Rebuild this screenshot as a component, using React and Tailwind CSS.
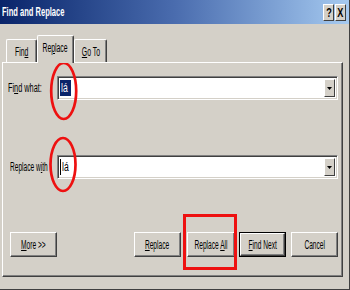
import React from "react";

const F = { fontFamily: '"Liberation Sans", Arial, sans-serif' };

function S({ children, k = "scale-x-[0.55]", o = "origin-left" }) {
  return <span className={`inline-block whitespace-nowrap ${k} ${o}`}>{children}</span>;
}

function Btn({ children, w = "w-[47px]", def = false, cls = "" }) {
  const inner = (
    <div className="h-full w-full bg-[#d4d0c8] border-t border-l border-t-white border-l-white border-r border-b border-r-[#404040] border-b-[#404040] shadow-[inset_-1px_-1px_0_#808080] flex items-center justify-center text-[12px] text-black">
      <S o="origin-center">{children}</S>
    </div>
  );
  return (
    <div className={`${w} h-[25px] ${def ? "border border-black" : ""} ${cls}`}>{inner}</div>
  );
}

function Combo({ children }) {
  return (
    <div className="w-[281px] h-[24px] border-t border-l border-t-[#808080] border-l-[#808080] border-b border-r border-b-white border-r-white shadow-[inset_1px_1px_0_#404040,inset_-1px_-1px_0_#d4d0c8] bg-white flex items-center pl-[2px] pr-[2px] py-[2px]">
      <div className="flex-1 flex items-center h-full text-[12px]">{children}</div>
      <div className="w-[11px] h-full bg-[#d4d0c8] border-t border-l border-t-white border-l-white border-r border-b border-r-[#404040] border-b-[#404040] flex items-center justify-center">
        <svg width="5" height="3" viewBox="0 0 5 3"><path d="M0 0H5L2.5 3Z" fill="#000" /></svg>
      </div>
    </div>
  );
}

function Tab({ children, active, w }) {
  return (
    <div
      className={`${w} ${active ? "h-[28px] -mb-px z-10 bg-[#d4d0c8]" : "h-[23px]"} border-t border-l border-r border-t-white border-l-white border-r-[#404040] shadow-[inset_-1px_0_0_#808080] rounded-t-[2px] flex items-center justify-center text-[12px] text-black ${active ? "pb-[3px]" : "pt-[1px]"}`}
    >
      <S k="scale-x-[0.57]" o="origin-center">{children}</S>
    </div>
  );
}

export default function App() {
  return (
    <div className="relative w-[350px] h-[290px] bg-[#d4d0c8] overflow-hidden border-r border-b border-r-[#404040] border-b-[#404040]" style={F}>
      <div className="flex flex-col">
        {/* title bar */}
        <div className="h-[24px] bg-gradient-to-r from-[#0a246a] via-[#4a6cae] to-[#a6caf0] flex items-center pl-[2px] pr-[3px]">
          <span className="inline-block whitespace-nowrap scale-x-[0.58] origin-left text-white font-bold text-[13px]">Find and Replace</span>
          <div className="ml-auto flex gap-[1px] items-center">
            <div className="w-[11px] h-[17px] bg-[#d4d0c8] border-t border-l border-t-white border-l-white border-r border-b border-r-[#404040] border-b-[#404040] flex items-center justify-center text-[13px] font-bold leading-none text-black">
              <S k="scale-x-[0.7]" o="origin-center">?</S>
            </div>
            <div className="w-[11px] h-[17px] bg-[#d4d0c8] border-t border-l border-t-white border-l-white border-r border-b border-r-[#404040] border-b-[#404040] flex items-center justify-center text-[13px] font-bold leading-none text-black">
              <S k="scale-x-[0.7]" o="origin-center">X</S>
            </div>
          </div>
        </div>

        {/* tabs */}
        <div className="mt-[11px] h-[27px] flex items-end pl-[6px] relative z-10">
          <Tab w="w-[31px]">Fin<u>d</u></Tab>
          <Tab w="w-[37px]" active>Re<u>p</u>lace</Tab>
          <Tab w="w-[33px]"><u>G</u>o To</Tab>
        </div>

        {/* panel */}
        <div className="ml-[2px] w-[341px] h-[215px] border-t border-l border-t-white border-l-white border-r border-b border-r-[#404040] border-b-[#404040] shadow-[inset_-1px_-1px_0_#808080] flex flex-col">
          <div className="mt-[13px] flex items-center">
            <div className="w-[54px] pl-[5px] text-[12px] text-black">
              <S k="scale-x-[0.61]">Fi<u>n</u>d what:</S>
            </div>
            <Combo>
              <span className="bg-[#0a246a] text-white h-[16px] flex items-center px-[1px]">
                <S k="scale-x-[0.72]">lá</S>
              </span>
            </Combo>
          </div>

          <div className="mt-[55px] flex items-center">
            <div className="w-[54px] pl-[7px] text-[12px] text-black">
              <S k="scale-x-[0.55]">Replace w<u>i</u>th</S>
            </div>
            <Combo>
              <span className="w-px h-[16px] bg-black" />
              <span className="ml-[1px] text-black">
                <S k="scale-x-[0.72]">lá</S>
              </span>
            </Combo>
          </div>

          <div className="mt-[53px] flex items-start pl-[7px]">
            <Btn><u>M</u>ore &gt;&gt;</Btn>
            <Btn cls="ml-[77px]"><u>R</u>eplace</Btn>
            <Btn w="w-[48px]" cls="ml-[6px]">Replace <u>A</u>ll</Btn>
            <Btn def cls="ml-[4px]"><u>F</u>ind Next</Btn>
            <Btn cls="ml-[5px]">Cancel</Btn>
          </div>
        </div>
      </div>

      {/* red annotations */}
      <svg className="absolute inset-0 pointer-events-none" width="350" height="290">
        <ellipse cx="63.7" cy="91" rx="12.5" ry="28" fill="none" stroke="#ee1111" strokeWidth="2.7" />
        <ellipse cx="63" cy="164.5" rx="12.5" ry="26.5" fill="none" stroke="#ee1111" strokeWidth="2.7" />
        <rect x="184.5" y="215.5" width="51" height="53" fill="none" stroke="#ee1111" strokeWidth="3" />
      </svg>
    </div>
  );
}
